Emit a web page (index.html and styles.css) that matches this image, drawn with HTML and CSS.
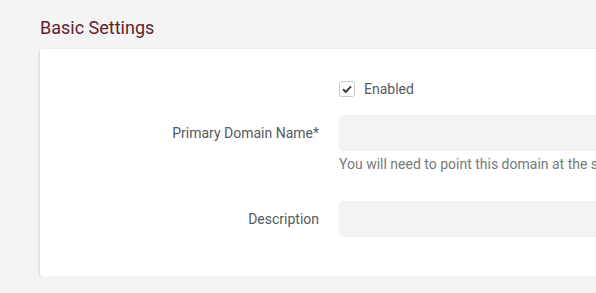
FILE: index.html
```html
<!doctype html>
<html lang="en">
    <head>
        <meta charset="UTF-8" />
        <title>Basic Settings</title>
        <link rel="stylesheet" href="styles.css">
    </head>
    <body>
        <section class="settings">
            <h2 class="settings__title">Basic Settings</h2>
            <div class="card">
                <div class="form-row form-row--check">
                    <div class="form-label"></div>
                    <label class="check">
                        <span class="check__box">
                            <svg width="10" height="8" viewBox="0 0 10 8">
                                <path d="M1 4.2 L3.8 7 L9 1.4" fill="none" stroke="#3d3d3d" stroke-width="2" />
                            </svg>
                        </span>
                        <span class="check__text">Enabled</span>
                    </label>
                </div>
                <div class="form-row">
                    <div class="form-label">Primary Domain Name*</div>
                    <div class="form-field">
                        <input class="input" type="text" />
                    </div>
                </div>
                <div class="form-row form-row--help">
                    <div></div>
                    <p class="help">You will need to point this domain at the server's IP address before it will work.</p>
                </div>
                <div class="form-row">
                    <div class="form-label">Description</div>
                    <div class="form-field">
                        <input class="input" type="text" />
                    </div>
                </div>
            </div>
        </section>
    </body>
</html>
```

FILE: styles.css
```css
* {
    padding: 0;
    margin: 0;
    box-sizing: border-box;
}

body {
    font-family: Roboto, "Noto Sans", sans-serif;
    background-color: #f4f4f4;
    color: #555a5f;
    overflow: hidden;
}

.settings {
    padding: 16px 0 0 40px;
}

.settings__title {
    font-size: 18px;
    font-weight: 400;
    line-height: 24px;
    color: #64202f;
    margin-bottom: 9px;
}

.card {
    width: 760px;
    background: #ffffff;
    border-radius: 2px;
    box-shadow:
        0 1px 3px rgba(0, 0, 0, 0.18),
        0 1px 2px rgba(0, 0, 0, 0.08);
    padding: 28px 0 39px;
}

.form-row {
    display: grid;
    grid-template-columns: 279px 1fr;
    column-gap: 20px;
    align-items: center;
}

.form-row--check {
    height: 24px;
    margin-bottom: 14px;
}

.form-row--help {
    margin-top: 3px;
    margin-bottom: 27px;
}

.form-label {
    text-align: right;
    font-size: 14px;
    color: #555a5f;
}

.check {
    display: flex;
    align-items: center;
    gap: 9px;
    font-size: 14px;
}

.check__box {
    width: 16px;
    height: 16px;
    border: 1px solid #c8c8c8;
    border-radius: 3px;
    display: flex;
    align-items: center;
    justify-content: center;
    background: #ffffff;
}

.check__text {
    color: #555a5f;
}

.input {
    display: block;
    width: 100%;
    height: 36px;
    border: none;
    border-radius: 4px;
    background: #f3f3f3;
    outline: none;
    font-family: inherit;
    font-size: 14px;
    padding: 0 12px;
}

.help {
    font-size: 14px;
    line-height: 20px;
    color: #77797b;
    white-space: nowrap;
}
```
